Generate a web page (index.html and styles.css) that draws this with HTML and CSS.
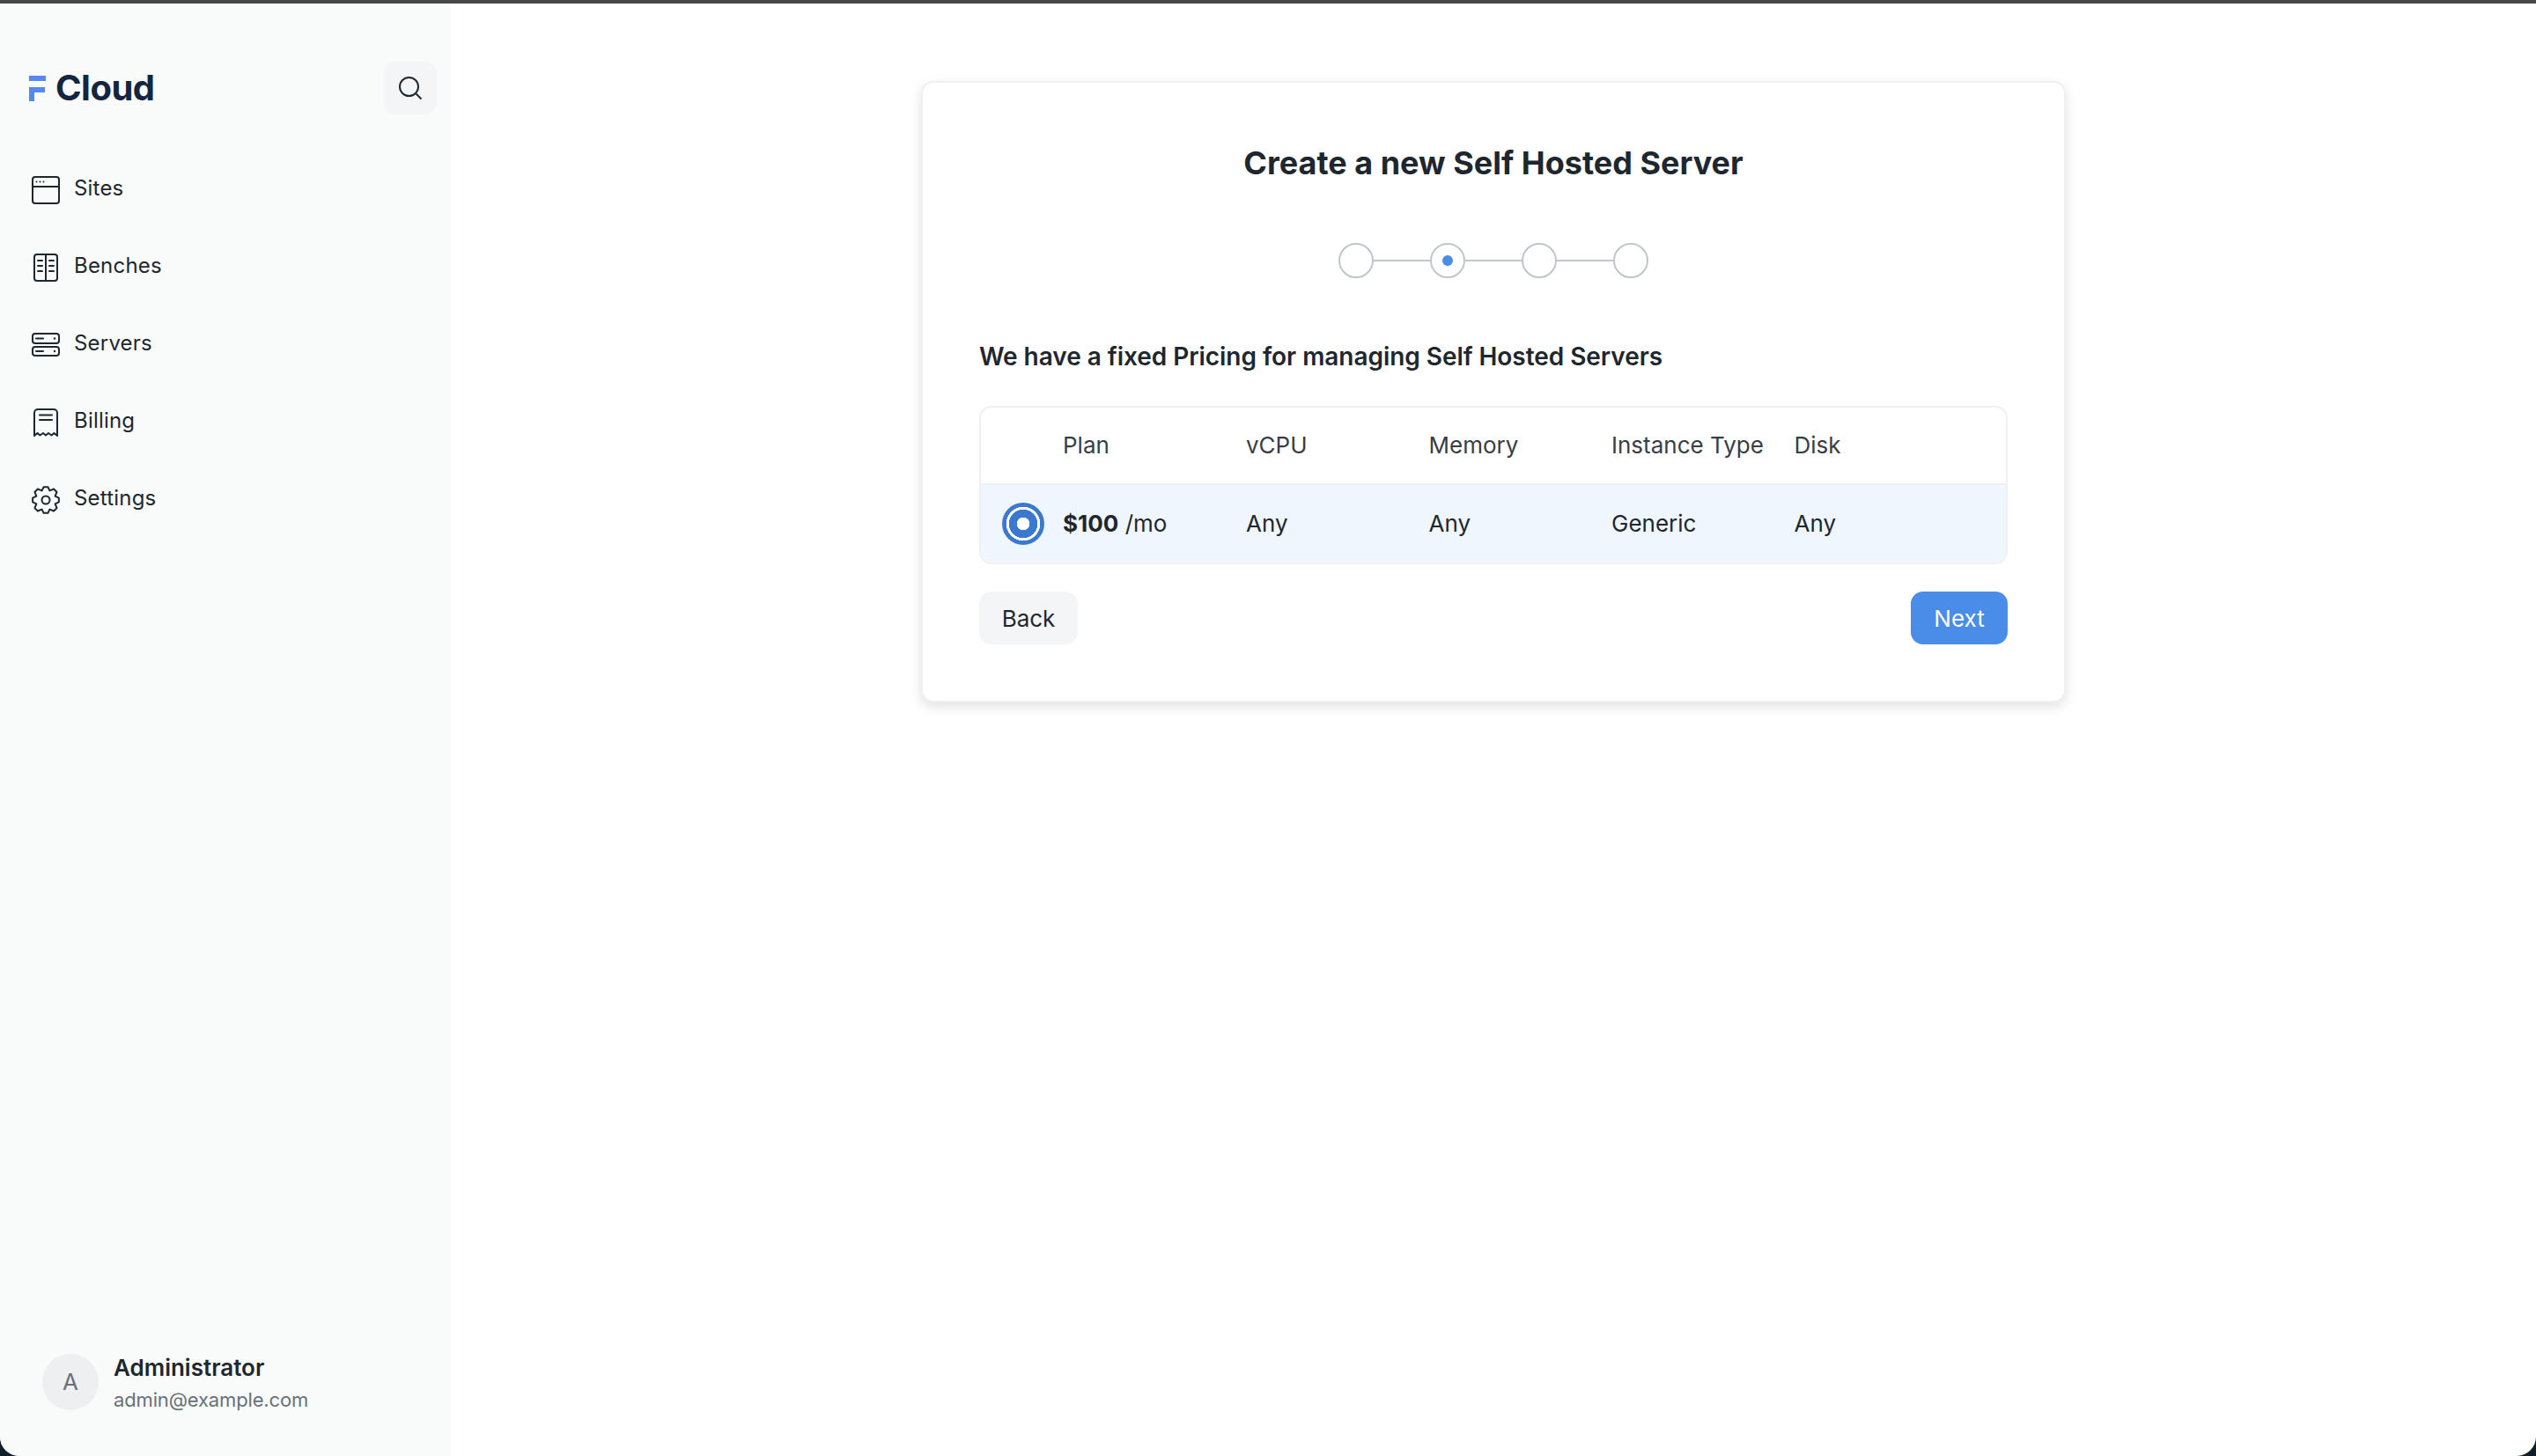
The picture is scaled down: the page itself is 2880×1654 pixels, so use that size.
FILE: index.html
```html
<!DOCTYPE html>
<html lang="en">
<head>
  <meta charset="UTF-8">
  <title>Create a new Self Hosted Server</title>
  <link rel="stylesheet" href="styles.css">
</head>
<body>
  <div class="window">
    <aside class="sidebar">
      <div class="brand">
        <div class="logo">
          <svg class="logo-mark" viewBox="0 0 20 29" width="20" height="29"><path d="M0 0h19v6H0zM0 13h18v6H6v10H0z"/></svg>
          <span class="logo-text">Cloud</span>
        </div>
        <button class="search-btn">
          <svg viewBox="0 0 28 28" width="28" height="28"><circle cx="12.5" cy="12.5" r="10.5"/><path d="M20.5 20.5l6 6"/></svg>
        </button>
      </div>
      <nav class="nav">
        <a class="nav-item">
          <svg class="nav-icon" viewBox="0 0 32 32"><rect x="1" y="1" width="30" height="30" rx="3"/><path d="M1 12h30"/><circle class="dot" cx="5.5" cy="6.5" r="1"/><circle class="dot" cx="9.5" cy="6.5" r="1"/><circle class="dot" cx="13.5" cy="6.5" r="1"/></svg>
          Sites
        </a>
        <a class="nav-item">
          <svg class="nav-icon" viewBox="0 0 32 32"><rect x="3" y="1" width="26" height="30" rx="3"/><path d="M16 1v30M7 8h5M7 14h5M7 20h5M20 8h5M20 14h5M20 20h5"/></svg>
          Benches
        </a>
        <a class="nav-item">
          <svg class="nav-icon" viewBox="0 0 32 32"><rect x="1" y="3" width="30" height="11" rx="3"/><rect x="1" y="18" width="30" height="10" rx="3"/><path d="M5 8.5h8M5 23h8"/><circle class="dot" cx="26" cy="8.5" r="1.2"/><circle class="dot" cx="26" cy="23" r="1.2"/></svg>
          Servers
        </a>
        <a class="nav-item">
          <svg class="nav-icon" viewBox="0 0 32 32"><path d="M3 31V5a4 4 0 0 1 4-4h18a4 4 0 0 1 4 4v26l-3.500-3-3 2.500-3.500-2.500-3 2.500-3-2.500-3.500 2.500-3-2.500z"/><path d="M9 7.500h14M9 13h14"/></svg>
          Billing
        </a>
        <a class="nav-item">
          <svg class="nav-icon" viewBox="0 0 32 32"><path d="M13.58 1.2h4.840l2 4.200 4.700-1.900 3.420 3.420-1.920 4.680 4.200 2v4.800l-4.200 2 1.920 4.710-3.420 3.430-4.710-1.920-2 4.200h-4.840l-2-4.200-4.710 1.920-3.430-3.430 1.920-4.710-4.200-2v-4.800l4.200-2-1.920-4.680 3.430-3.420 4.710 1.900z"/><circle cx="16" cy="16" r="4.500"/></svg>
          Settings
        </a>
      </nav>
      <div class="user">
        <div class="avatar">A</div>
        <div class="user-info">
          <div class="user-name">Administrator</div>
          <div class="user-email">admin@example.com</div>
        </div>
      </div>
    </aside>
    <main class="main">
      <section class="card">
        <h1 class="title">Create a new Self Hosted Server</h1>
        <div class="steps">
          <span class="step"></span>
          <span class="step-line"></span>
          <span class="step active"></span>
          <span class="step-line"></span>
          <span class="step"></span>
          <span class="step-line"></span>
          <span class="step"></span>
        </div>
        <h2 class="subtitle">We have a fixed Pricing for managing Self Hosted Servers</h2>
        <div class="plans">
          <div class="plan-row plan-head">
            <span></span>
            <span>Plan</span>
            <span>vCPU</span>
            <span>Memory</span>
            <span>Instance Type</span>
            <span>Disk</span>
          </div>
          <div class="plan-row selected">
            <span class="radio"></span>
            <span><b>$100</b> /mo</span>
            <span>Any</span>
            <span>Any</span>
            <span>Generic</span>
            <span>Any</span>
          </div>
        </div>
        <div class="actions">
          <button class="btn btn-back">Back</button>
          <button class="btn btn-next">Next</button>
        </div>
      </section>
    </main>
  </div>
</body>
</html>
```

FILE: styles.css
```css
* { box-sizing: border-box; }
html, body { height: 100%; }
body {
  margin: 0;
  background: #0f1f2b;
  font-family: 'Inter', sans-serif;
  font-size: 26px;
  color: #1f272e;
}
.window {
  height: 100%;
  display: flex;
  background: white;
  border-top: 4px solid #484848;
  border-radius: 0 0 22px 22px;
  overflow: hidden;
}

/* sidebar */
.sidebar {
  width: 512px;
  flex: none;
  display: flex;
  flex-direction: column;
  background: #f9fafa;
  padding: 66px 16px 47px 0;
}
.brand {
  display: flex;
  justify-content: space-between;
  align-items: center;
  padding-left: 33px;
}
.logo { display: flex; align-items: center; gap: 10px; }
.logo-mark { fill: #5588f0; }
.logo-text {
  font-size: 40px;
  line-height: 48px;
  font-weight: 700;
  color: #14263f;
  letter-spacing: -0.5px;
}
.search-btn {
  width: 60px;
  height: 60px;
  padding: 0;
  border: none;
  border-radius: 14px;
  background: #f4f5f6;
  display: flex;
  justify-content: center;
  align-items: center;
}
.search-btn svg { fill: none; stroke: #1f272e; stroke-width: 2; }
.nav {
  display: flex;
  flex-direction: column;
  gap: 56px;
  margin-top: 68px;
  padding-left: 36px;
  font-size: 24px;
  letter-spacing: 0.2px;
}
.nav-item {
  display: flex;
  align-items: center;
  gap: 16px;
  height: 32px;
  line-height: 28px;
}
.nav-icon {
  width: 32px;
  height: 32px;
  margin-top: 4px;
  flex: none;
  fill: none;
  stroke: #1f272e;
  stroke-width: 2;
  stroke-linejoin: round;
  stroke-linecap: round;
}
.nav-icon .dot { fill: #1f272e; stroke: none; }
.user {
  margin-top: auto;
  display: flex;
  align-items: center;
  gap: 17px;
  padding-left: 48px;
}
.avatar {
  width: 64px;
  height: 64px;
  margin-top: -6px;
  border-radius: 50%;
  background: #eeeff1;
  color: #687178;
  font-size: 26px;
  display: flex;
  justify-content: center;
  align-items: center;
}
.user-name { font-weight: 600; line-height: 32px; }
.user-email {
  font-size: 22px;
  line-height: 34px;
  padding-top: 3px;
  color: #687178;
  letter-spacing: -0.15px;
}

/* main card */
.main {
  flex: 1;
  display: flex;
  justify-content: center;
  align-items: flex-start;
  padding-top: 88px;
}
.card {
  width: 1300px;
  height: 706px;
  padding: 61px 64px 0;
  background: white;
  border: 2px solid #eef0f2;
  border-radius: 14px;
  box-shadow: 0 5px 14px rgba(0, 0, 0, 0.12);
}
.title {
  margin: 0;
  font-size: 36px;
  line-height: 60px;
  font-weight: 700;
  text-align: center;
}
.steps {
  display: flex;
  justify-content: center;
  align-items: center;
  margin-top: 61px;
}
.step {
  width: 40px;
  height: 40px;
  border: 2px solid #c0c6cc;
  border-radius: 50%;
  display: flex;
  justify-content: center;
  align-items: center;
}
.step.active::after {
  content: "";
  width: 12px;
  height: 12px;
  border-radius: 50%;
  background: #4a8de8;
}
.step-line { width: 64px; height: 2px; background: #c0c6cc; }
.subtitle {
  margin: 67px 0 0;
  font-size: 28px;
  line-height: 44px;
  font-weight: 600;
  letter-spacing: -0.05px;
}
.plans {
  margin-top: 34px;
  border: 2px solid #eef0f2;
  border-radius: 14px;
  overflow: hidden;
}
.plan-row {
  display: grid;
  grid-template-columns: 93px 208px 207.5px 207.5px 207.5px 208px;
  align-items: center;
}
.plan-head {
  height: 88px;
  padding-bottom: 2px;
  color: #383e44;
  border-bottom: 2px solid #eef0f2;
}
.selected { height: 88px; padding-bottom: 1px; background: #eff6fd; }
.selected b { font-weight: 700; }
.radio {
  margin-left: 24px;
  width: 48px;
  height: 48px;
  border-radius: 50%;
  background: radial-gradient(circle, white 0 7px, #3b78d0 7.500px 16px, white 16.500px 19px, #3b78d0 19.500px);
}
.actions {
  display: flex;
  justify-content: space-between;
  margin-top: 31px;
}
.btn {
  height: 60px;
  padding: 0;
  border: none;
  border-radius: 14px;
  font-family: inherit;
  font-size: 26px;
}
.btn-back { width: 112px; background: #f4f5f6; color: #1f272e; }
.btn-next { width: 110px; background: #4a8de8; color: white; }
```
